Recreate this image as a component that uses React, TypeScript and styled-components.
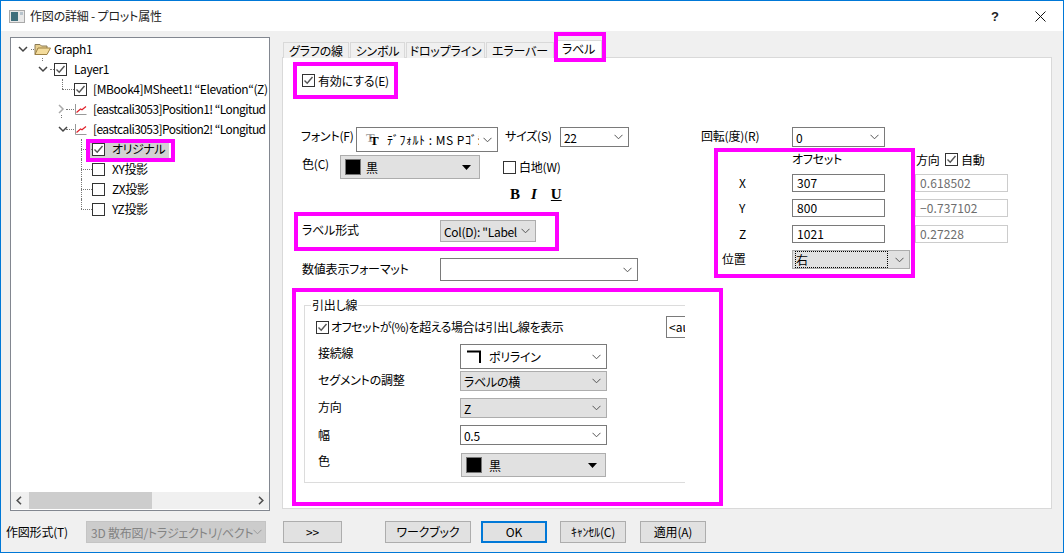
import React from "react";
import styled, { createGlobalStyle } from "styled-components";

const Global = createGlobalStyle`
  html, body { margin: 0; padding: 0; background: #fff; overflow: hidden; }
  * { box-sizing: border-box; }
  body { font-family: "Noto Sans CJK JP", "Liberation Sans", sans-serif; font-size: 12px; color: #000; font-feature-settings: "palt"; }
`;

const Win = styled.div`
  position: relative; width: 1064px; height: 553px; background: #f0f0f0;
  border: 1px solid #0078d7; display: flex; flex-direction: column; overflow: hidden;
`;
const TitleBar = styled.div`
  height: 30px; background: #fff; display: flex; align-items: center; padding-left: 8px; flex: none;
`;
const TitleText = styled.div`
  margin-left: 5px; font-size: 12px; letter-spacing: -0.2px; color: #222; line-height: 30px;
`;
const TitleBtns = styled.div`
  margin-left: auto; display: flex; align-items: center;
`;
const Help = styled.span`
  width: 46px; padding-left: 2px; text-align: center; font-family: "Liberation Sans", sans-serif; font-size: 13px; font-weight: bold; color: #222;
`;
const CloseBtn = styled.span`
  width: 46px; display: flex; justify-content: center;
`;

const Main = styled.div`
  flex: none; height: 480px; display: flex; padding: 6px 0 0 9px;
`;
const Tree = styled.div`
  width: 260px; height: 474px; background: #fff; border: 1px solid #828790; display: flex; flex-direction: column; flex: none;
`;
const TreeBody = styled.div`
  flex: 1; padding-top: 1px; overflow: hidden;
`;
const TreeRowBox = styled.div<{ $x: number }>`
  position: relative; height: 20px; display: flex; align-items: center; padding-left: ${p => p.$x}px; white-space: nowrap;
`;
const TreeContent = styled.div<{ $sel?: boolean }>`
  display: flex; align-items: center; height: 19px; padding: 0 4px 0 2px; margin-left: -2px;
  background: ${p => (p.$sel ? "#d2d2d2" : "transparent")};
`;
const ChevSlot = styled.span`
  width: 16px; flex: none; display: flex; align-items: center;
`;
const TreeText = styled.span<{ $gap: number; $tight?: boolean }>`
  margin-left: ${p => p.$gap}px; letter-spacing: ${p => (p.$tight ? -0.58 : -0.42)}px; line-height: 20px;
`;
const DotH = styled.i<{ $l: number; $w: number }>`
  position: absolute; left: ${p => p.$l}px; width: ${p => p.$w}px; top: 10px; border-top: 1px dotted #777;
`;
const DotV = styled.i<{ $l: number; $t: number; $h: number }>`
  position: absolute; left: ${p => p.$l}px; top: ${p => p.$t}px; height: ${p => p.$h}px; border-left: 1px dotted #777;
`;
const HScroll = styled.div`
  height: 17px; margin-bottom: 1px; background: #f0f0f0; display: flex; align-items: center; justify-content: space-between; padding: 0 5px;
  position: relative; flex: none;
`;
const Thumb = styled.div`
  position: absolute; left: 18px; top: 0; width: 123px; height: 17px; background: #cdcdcd;
`;

const Right = styled.div`
  margin-left: 12px; padding-top: 5px; width: 770px; flex: none; display: flex; flex-direction: column;
`;
const Tabs = styled.div`
  display: flex; height: 16px; padding-left: 1px; flex: none;
`;
const Tab = styled.div<{ $w: number; $active?: boolean }>`
  width: ${p => p.$w}px; margin-right: 1px; height: ${p => (p.$active ? 18 : 16)}px; margin-top: ${p => (p.$active ? -2 : 0)}px;
  background: ${p => (p.$active ? "#fff" : "#f0f0f0")}; border: 1px solid #d9d9d9; border-bottom: none;
  text-align: center; line-height: 15px; font-size: 12px; letter-spacing: -0.2px; position: relative; z-index: 1; white-space: nowrap;
`;
const Panel = styled.div`
  height: 452px; margin-top: -1px; background: #fff; border: 1px solid #d9d9d9; display: flex;
`;
const LeftCol = styled.div`
  width: 405px; padding-left: 18px; flex: none; display: flex; flex-direction: column;
`;
const RightCol = styled.div`
  padding: 69px 0 0 13px; flex: none; width: 340px;
`;
const Row = styled.div<{ $top: number; $h: number }>`
  display: flex; align-items: center; margin-top: ${p => p.$top}px; height: ${p => p.$h}px; flex: none; white-space: nowrap;
`;
const Lbl = styled.span<{ $w?: number; $ml?: number; $up?: number }>`
  ${p => (p.$w ? `width: ${p.$w}px; flex: none;` : "")}
  margin-left: ${p => p.$ml ?? 0}px; margin-bottom: ${p => p.$up ?? 0}px; letter-spacing: -0.2px; line-height: 14px; white-space: nowrap;
`;
const Box = styled.span<{ $ml?: number }>`
  width: 13px; height: 13px; border: 1px solid #333; background: #fff; flex: none; display: inline-flex; margin-left: ${p => p.$ml ?? 0}px;
`;
const SelectBox = styled.div<{ $w: number; $h: number; $gray?: boolean; $ml?: number; $up?: number }>`
  width: ${p => p.$w}px; height: ${p => p.$h}px; flex: none; margin-left: ${p => p.$ml ?? 0}px; margin-bottom: ${p => p.$up ?? 0}px;
  background: ${p => (p.$gray ? "#e1e1e1" : "#fff")}; border: 1px solid ${p => (p.$gray ? "#adadad" : "#7a7a7a")};
  display: flex; align-items: center; padding: 0 5px 0 3px; overflow: hidden; white-space: nowrap;
`;
const SelText = styled.span<{ $ml?: number; $focus?: boolean }>`
  flex: 1; min-width: 0; overflow: hidden; margin-left: ${p => p.$ml ?? 0}px; letter-spacing: -0.3px; line-height: 15px;
  ${p => (p.$focus ? "outline: 1px dotted #000; outline-offset: 0; margin-right: 8px;" : "")}
`;
const FontName = styled(SelText)`
  font-feature-settings: normal; letter-spacing: 0.5px; white-space: pre; margin-right: 4px;
`;
const Swatch = styled.span`
  width: 16px; height: 16px; background: #000; border: 1px solid #777; flex: none; margin-left: 1px;
`;
const FontGlyph = styled.span`
  width: 16px; height: 16px; margin-left: 3px; padding-left: 7px; flex: none; font-family: "Liberation Serif", serif; font-weight: bold; font-size: 13px; line-height: 18px;
  text-shadow: -4px -3px 0 #a0a0a0;
`;
const Biu = styled.span<{ $ml: number; $i?: boolean; $u?: boolean }>`
  margin-left: ${p => p.$ml}px; font-family: "Liberation Serif", serif; font-weight: bold; font-size: 15px; line-height: 14px;
  font-style: ${p => (p.$i ? "italic" : "normal")}; text-decoration: ${p => (p.$u ? "underline" : "none")};
`;
const Group = styled.div`
  margin: 24px 0 0 3px; width: 381px; height: 178px; border: 1px solid #dcdcdc; border-right: none; flex: none;
`;
const Legend = styled.div`
  margin: -8px 0 0 6px; width: max-content; height: 14px; padding: 0 1px; background: #fff; line-height: 14px; letter-spacing: -0.2px;
`;
const GRow = styled.div<{ $top: number; $h: number }>`
  display: flex; align-items: center; margin-top: ${p => p.$top}px; height: ${p => p.$h}px; padding-left: 13px; white-space: nowrap;
`;
const LeaderText = styled(Lbl)`
  letter-spacing: -0.5px;
`;
const AutoBox = styled.div`
  margin-left: auto; width: 19px; height: 22px; border: 1px solid #7a7a7a; border-right: none; overflow: hidden; line-height: 20px; padding-left: 2px; font-size: 12px;
`;
const RGrid = styled.div`
  display: grid; grid-template-columns: 91px 93px 30px 93px; align-items: center;
`;
const Input = styled.div<{ $off?: boolean }>`
  height: 18px; border: 1px solid ${p => (p.$off ? "#ccc" : "#7a7a7a")}; color: ${p => (p.$off ? "#6d6d6d" : "#000")};
  padding-left: 4px; line-height: 16px; font-size: 12px; letter-spacing: 0.1px;
`;
const AxisLbl = styled.span<{ $pl: number }>`
  padding-left: ${p => p.$pl}px; line-height: 14px;
`;
const Inline = styled.div`
  display: flex; align-items: center;
`;
const Spacer = styled.div<{ $h: number }>`
  height: ${p => p.$h}px;
`;

const Footer = styled.div`
  flex: none; height: 22px; margin-top: 10px; display: flex; align-items: center; padding-left: 5px;
`;
const FootSelect = styled.div`
  margin-left: 10px; width: 180px; height: 22px; background: #cccccc; border: 1px solid #c4c4c4; color: #838383;
  display: flex; align-items: center; padding: 0 3px 0 4px; overflow: hidden; white-space: nowrap; flex: none;
`;
const FootText = styled.span`
  flex: 1; min-width: 0; overflow: hidden; letter-spacing: -0.2px;
`;
const Btn = styled.div<{ $w: number; $ml: number; $primary?: boolean; $half?: boolean }>`
  width: ${p => p.$w}px; margin-left: ${p => p.$ml}px; height: 22px; flex: none; background: #e1e1e1;
  border: ${p => (p.$primary ? "2px solid #0078d7" : "1px solid #adadad")};
  display: flex; align-items: center; justify-content: center; letter-spacing: -0.2px; white-space: nowrap; line-height: 14px;
  ${p => (p.$half ? "font-feature-settings: normal;" : "")}
`;
const Highlight = styled.div<{ $x: number; $y: number; $w: number; $h: number }>`
  position: absolute; left: ${p => p.$x - 1}px; top: ${p => p.$y - 1}px; width: ${p => p.$w}px; height: ${p => p.$h}px;
  border: 4px solid #ff00ff; z-index: 5; pointer-events: none;
`;

const ChevSvg = styled.svg`
  flex: none;
`;
const ThinTri = styled.svg`
  flex: none; margin-right: 3px;
`;
const PolySvg = styled.svg`
  flex: none; margin-left: 2px;
`;
const ArrowSvg = styled.svg`
  position: relative; z-index: 1;
`;

const Chev = ({ color = "#555" }: { color?: string }) => (
  <ChevSvg width="9" height="6" viewBox="0 0 9 6"><path d="M0.5 0.8 L4.5 4.8 L8.5 0.8" fill="none" stroke={color} strokeWidth="1" /></ChevSvg>
);
const TreeChev = ({ open = true }: { open?: boolean }) =>
  open ? (
    <svg width="10" height="7" viewBox="0 0 10 7"><path d="M1 1 L5 5 L9 1" fill="none" stroke="#444" strokeWidth="1.5" /></svg>
  ) : (
    <svg width="7" height="10" viewBox="0 0 7 10"><path d="M1 1 L5 5 L1 9" fill="none" stroke="#aaa" strokeWidth="1.5" /></svg>
  );
const Tick = ({ color = "#555" }: { color?: string }) => (
  <svg width="11" height="11" viewBox="0 0 11 11"><path d="M1.5 5.5 L4.2 8.2 L9.5 2" fill="none" stroke={color} strokeWidth="1.4" /></svg>
);
const Check = ({ on, ml }: { on?: boolean; ml?: number }) => <Box $ml={ml}>{on && <Tick />}</Box>;
const Tri = () => (
  <ThinTri width="9" height="5" viewBox="0 0 9 5"><path d="M0 0 H9 L4.5 5 Z" fill="#000" /></ThinTri>
);
const Folder = () => (
  <ChevSvg width="17" height="14" viewBox="0 0 17 14">
    <path d="M1 12.5 V2.5 H6 L7.5 4 H13 V6" fill="#e8cf8f" stroke="#8a7a55" />
    <path d="M1 12.5 L4 6 H16.5 L13 12.5 Z" fill="#f4dc9c" stroke="#9c8043" />
  </ChevSvg>
);
const PlotIcon = () => (
  <ChevSvg width="13" height="13" viewBox="0 0 13 13">
    <path d="M1.5 1 V11.5 H12.5" fill="none" stroke="#999" />
    <path d="M2.5 9.5 L6.5 6 L8 6.8 L12 3.5" fill="none" stroke="#e0202a" strokeWidth="1.2" />
  </ChevSvg>
);
const PolyIcon = () => (
  <PolySvg width="16" height="14" viewBox="0 0 16 14"><path d="M1 1.5 H14 V13" fill="none" stroke="#000" strokeWidth="2" /></PolySvg>
);
const WinIcon = () => (
  <ChevSvg width="16" height="13" viewBox="0 0 16 13">
    <rect x="0.5" y="0.5" width="15" height="12" fill="#e8e8e8" stroke="#a9a9a9" />
    <rect x="2" y="2" width="7" height="9" fill="#3f6f7c" />
    <rect x="11" y="2" width="3" height="3" fill="#b7c3cc" />
  </ChevSvg>
);
const ScrollArrow = ({ left }: { left?: boolean }) => (
  <ArrowSvg width="6" height="9" viewBox="0 0 6 9">
    <path d={left ? "M5 0.8 L1.2 4.5 L5 8.2" : "M1 0.8 L4.8 4.5 L1 8.2"} fill="none" stroke="#505050" strokeWidth="1.6" />
  </ArrowSvg>
);

const TreeRow = ({ x, chev, gap, icon, text, sel, tight, children }: { x: number; chev?: React.ReactNode; gap: number; icon: React.ReactNode; text: string; sel?: boolean; tight?: boolean; children?: React.ReactNode }) => (
  <TreeRowBox $x={x}>
    {children}
    <ChevSlot>{chev}</ChevSlot>
    <TreeContent $sel={sel}>
      {icon}
      <TreeText $gap={gap} $tight={tight}>{text}</TreeText>
    </TreeContent>
  </TreeRowBox>
);

export default function App() {
  return (
    <Win>
      <Global />
      <TitleBar>
        <WinIcon />
        <TitleText>作図の詳細 - プロット属性</TitleText>
        <TitleBtns>
          <Help>?</Help>
          <CloseBtn>
            <svg width="11" height="11" viewBox="0 0 11 11"><path d="M0.5 0.5 L10.5 10.5 M10.5 0.5 L0.5 10.5" stroke="#111" strokeWidth="1" /></svg>
          </CloseBtn>
        </TitleBtns>
      </TitleBar>
      <Main>
        <Tree>
          <TreeBody>
            <TreeRow x={7} chev={<TreeChev />} gap={3} icon={<Folder />} text="Graph1"><DotH $l={20} $w={3} /></TreeRow>
            <TreeRow x={27} chev={<TreeChev />} gap={7} icon={<Check on />} text="Layer1"><DotH $l={39} $w={4} /><DotV $l={31} $t={-1} $h={3} /></TreeRow>
            <TreeRow x={47} gap={6} icon={<Check on />} text={"[MBook4]MSheet1! “Elevation“(Z)"}><DotH $l={51} $w={12} /><DotV $l={51} $t={0} $h={10} /></TreeRow>
            <TreeRow x={47} tight chev={<TreeChev open={false} />} gap={6} icon={<PlotIcon />} text={"[eastcali3053]Position1! “Longitud"}><DotH $l={55} $w={8} /></TreeRow>
            <TreeRow x={47} tight chev={<TreeChev />} gap={6} icon={<PlotIcon />} text={"[eastcali3053]Position2! “Longitud"}><DotH $l={55} $w={8} /><DotV $l={50} $t={-4} $h={3} /></TreeRow>
            <TreeRow x={65} sel gap={7} icon={<Check on />} text="オリジナル"><DotH $l={70} $w={11} /><DotV $l={70} $t={0} $h={20} /></TreeRow>
            <TreeRow x={65} gap={7} icon={<Check />} text="XY投影"><DotH $l={70} $w={11} /><DotV $l={70} $t={0} $h={20} /></TreeRow>
            <TreeRow x={65} gap={7} icon={<Check />} text="ZX投影"><DotH $l={70} $w={11} /><DotV $l={70} $t={0} $h={20} /></TreeRow>
            <TreeRow x={65} gap={7} icon={<Check />} text="YZ投影"><DotH $l={70} $w={11} /><DotV $l={70} $t={0} $h={10} /></TreeRow>
          </TreeBody>
          <HScroll>
            <Thumb />
            <ScrollArrow left />
            <ScrollArrow />
          </HScroll>
        </Tree>
        <Right>
          <Tabs>
            <Tab $w={66}>グラフの線</Tab>
            <Tab $w={55}>シンボル</Tab>
            <Tab $w={79}>ドロップライン</Tab>
            <Tab $w={68}>エラーバー</Tab>
            <Tab $w={47} $active>ラベル</Tab>
          </Tabs>
          <Panel>
            <LeftCol>
              <Row $top={15} $h={15}>
                <Check on ml={1} />
                <Lbl $ml={3}>有効にする(E)</Lbl>
              </Row>
              <Row $top={39} $h={25}>
                <Lbl $w={55} $up={8}>フォント(F)</Lbl>
                <SelectBox $w={142} $h={25}>
                  <FontGlyph>T</FontGlyph>
                  <FontName $ml={8}>ﾃﾞﾌｫﾙﾄ : MS Pｺﾞｼｯｸ</FontName>
                  <Chev />
                </SelectBox>
                <Lbl $w={55} $ml={7} $up={8}>サイズ(S)</Lbl>
                <SelectBox $w={69} $h={20} $up={5}>
                  <SelText>22</SelText>
                  <Chev />
                </SelectBox>
              </Row>
              <Row $top={3} $h={24}>
                <Lbl $w={38} $ml={1} $up={6}>色(C)</Lbl>
                <SelectBox $w={140} $h={24} $gray>
                  <Swatch />
                  <SelText $ml={5}>黒</SelText>
                  <Tri />
                </SelectBox>
                <Check ml={23} />
                <Lbl $ml={3}>白地(W)</Lbl>
              </Row>
              <Row $top={8} $h={14}>
                <Biu $ml={209}>B</Biu>
                <Biu $ml={11} $i>I</Biu>
                <Biu $ml={14} $u>U</Biu>
              </Row>
              <Row $top={19} $h={22}>
                <Lbl $w={138} $ml={1} $up={2}>ラベル形式</Lbl>
                <SelectBox $w={96} $h={22} $gray>
                  <SelText>Col(D): "Label</SelText>
                  <Chev />
                </SelectBox>
              </Row>
              <Row $top={16} $h={23}>
                <Lbl $w={138} $ml={1} $up={2}>数値表示フォーマット</Lbl>
                <SelectBox $w={198} $h={23}>
                  <SelText />
                  <Chev />
                </SelectBox>
              </Row>
              <Group>
                <Legend>引出し線</Legend>
                <GRow $top={4} $h={22}>
                  <Check on ml={-2} />
                  <LeaderText $ml={2}>オフセットが(%)を超える場合は引出し線を表示</LeaderText>
                  <AutoBox>&lt;au</AutoBox>
                </GRow>
                <GRow $top={6} $h={25}>
                  <Lbl $w={142} $up={8}>接続線</Lbl>
                  <SelectBox $w={147} $h={25}>
                    <PolyIcon />
                    <SelText $ml={7}>ポリライン</SelText>
                    <Chev />
                  </SelectBox>
                </GRow>
                <GRow $top={2} $h={20}>
                  <Lbl $w={142} $up={2}>セグメントの調整</Lbl>
                  <SelectBox $w={147} $h={20} $gray><SelText>ラベルの横</SelText><Chev /></SelectBox>
                </GRow>
                <GRow $top={7} $h={20}>
                  <Lbl $w={142} $up={3}>方向</Lbl>
                  <SelectBox $w={147} $h={20} $gray><SelText>Z</SelText><Chev /></SelectBox>
                </GRow>
                <GRow $top={7} $h={20}>
                  <Lbl $w={142}>幅</Lbl>
                  <SelectBox $w={147} $h={20}><SelText>0.5</SelText><Chev /></SelectBox>
                </GRow>
                <GRow $top={8} $h={24}>
                  <Lbl $w={143} $up={8}>色</Lbl>
                  <SelectBox $w={145} $h={24} $gray>
                    <Swatch />
                    <SelText $ml={7}>黒</SelText>
                    <Tri />
                  </SelectBox>
                </GRow>
              </Group>
            </LeftCol>
            <RightCol>
              <RGrid>
                <Lbl $up={2}>回転(度)(R)</Lbl>
                <SelectBox $w={93} $h={20}><SelText>0</SelText><Chev /></SelectBox>
              </RGrid>
              <Row $top={6} $h={13}>
                <Lbl $w={124} $ml={91} $up={2}>オフセット</Lbl>
                <Inline>
                  <Lbl $w={29}>方向</Lbl>
                  <Check on />
                  <Lbl $ml={3}>自動</Lbl>
                </Inline>
              </Row>
              <Spacer $h={8} />
              <RGrid>
                <AxisLbl $pl={38}>X</AxisLbl><Input>307</Input><span /><Input $off>0.618502</Input>
              </RGrid>
              <Spacer $h={7} />
              <RGrid>
                <AxisLbl $pl={38}>Y</AxisLbl><Input>800</Input><span /><Input $off>−0.737102</Input>
              </RGrid>
              <Spacer $h={8} />
              <RGrid>
                <AxisLbl $pl={38}>Z</AxisLbl><Input>1021</Input><span /><Input $off>0.27228</Input>
              </RGrid>
              <Row $top={7} $h={19}>
                <Lbl $w={70} $ml={21} $up={2}>位置</Lbl>
                <SelectBox $w={118} $h={19} $gray>
                  <SelText $focus>右</SelText>
                  <Chev />
                </SelectBox>
              </Row>
            </RightCol>
          </Panel>
        </Right>
      </Main>
      <Footer>
        <Lbl $w={70}>作図形式(T)</Lbl>
        <FootSelect>
          <FootText>3D 散布図/トラジェクトリ/ベクトル</FootText>
          <Chev color="#999" />
        </FootSelect>
        <Btn $w={59} $ml={17}>&gt;&gt;</Btn>
        <Btn $w={86} $ml={43}>ワークブック</Btn>
        <Btn $w={66} $ml={10} $primary>OK</Btn>
        <Btn $w={66} $ml={13} $half>ｷｬﾝｾﾙ(C)</Btn>
        <Btn $w={66} $ml={14}>適用(A)</Btn>
      </Footer>
      <Highlight $x={86} $y={139} $w={89} $h={23} />
      <Highlight $x={554} $y={32} $w={52} $h={30} />
      <Highlight $x={293} $y={62} $w={105} $h={37} />
      <Highlight $x={294} $y={212} $w={265} $h={39} />
      <Highlight $x={714} $y={148} $w={201} $h={130} />
      <Highlight $x={292} $y={288} $w={431} $h={218} />
    </Win>
  );
}
